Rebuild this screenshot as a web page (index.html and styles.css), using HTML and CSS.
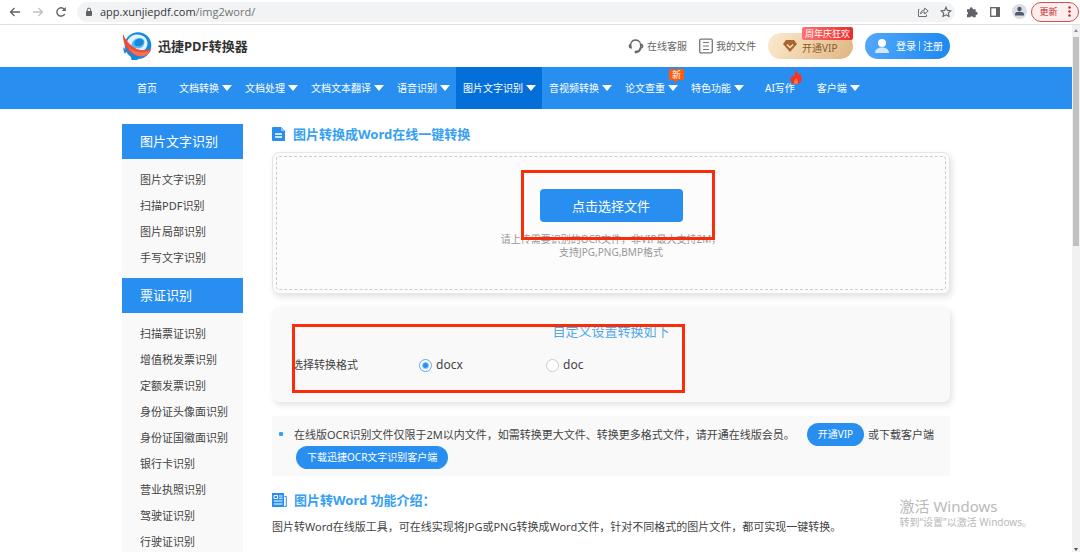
FILE: index.html
```html
<!DOCTYPE html>
<html lang="zh-CN">
<head>
<meta charset="utf-8">
<title>图片转换成Word在线一键转换</title>
<link rel="stylesheet" href="styles.css">
</head>
<body>
<div class="browser-bar">
  <button class="tool" aria-label="后退"><svg width="12" height="12" viewBox="0 0 12 12" fill="none" stroke="#5f6368" stroke-width="1.3"><path d="M11 6H1.5M5.5 2 1.5 6l4 4"/></svg></button>
  <button class="tool" aria-label="前进"><svg width="12" height="12" viewBox="0 0 12 12" fill="none" stroke="#bfc2c6" stroke-width="1.3"><path d="M1 6h9.5M6.5 2l4 4-4 4"/></svg></button>
  <button class="tool" aria-label="刷新"><svg width="12" height="12" viewBox="0 0 12 12" fill="none" stroke="#5f6368" stroke-width="1.4"><path d="M9.8 8A4.2 4.2 0 1 1 9.300 3.200"/><path d="M10.800 1v4H6.800z" fill="#5f6368" stroke="none"/></svg></button>
  <div class="address">
    <svg width="8" height="10" viewBox="0 0 8 10"><rect x="1" y="4" width="6" height="5" rx=".7" fill="#5f6368"/><path d="M2.300 4.500V2.800a1.700 1.700 0 0 1 3.400 0v1.700" fill="none" stroke="#5f6368"/></svg>
    <span class="url">app.xunjiepdf.com<span class="url-path">/img2word/</span></span>
    <button class="tool" aria-label="分享"><svg width="12" height="12" viewBox="0 0 12 12" fill="none" stroke="#6c7074"><path d="M2.500 3.500h-1v7h8v-2"/><path d="M3.500 8c.3-2.600 1.700-3.900 4.200-4V2l3.500 3-3.500 3V6C6 6 4.500 6.700 3.500 8z"/></svg></button>
    <button class="tool" aria-label="收藏"><svg width="12" height="12" viewBox="0 0 12 12" fill="none" stroke="#5f6368" stroke-width="1.1"><path d="m6 1.300 1.400 3.100 3.400.4-2.500 2.300.7 3.400L6 8.800l-3 1.700.7-3.400L1.200 4.800l3.400-.4z"/></svg></button>
  </div>
  <button class="tool" aria-label="扩展"><svg width="12" height="12" viewBox="0 0 12 12" fill="#5f6368"><path d="M1 3.200h2.800a1.500 1.500 0 1 1 2.900 0h3v2.700a1.500 1.500 0 1 1 0 2.900v2.400H7a1.400 1.400 0 0 0-2.700 0H1V8.500a1.400 1.400 0 0 0 0-2.700z"/></svg></button>
  <button class="tool" aria-label="侧边栏"><svg width="12" height="12" viewBox="0 0 12 12"><rect x="1.700" y="1.700" width="8.600" height="8.600" fill="none" stroke="#5f6368" stroke-width="1.300"/><path d="M7 1.500h3.500v9H7z" fill="#5f6368"/></svg></button>
  <button class="tool avatar" aria-label="个人资料"><svg width="15" height="15" viewBox="0 0 15 15"><circle cx="7.500" cy="7.500" r="7.500" fill="#dadde3"/><circle cx="7.500" cy="5" r="2.200" fill="#4d5873"/><path d="M3 11.500V10c0-1.400 2.300-2.300 4.500-2.300S12 8.600 12 10v1.500z" fill="#4d5873"/></svg></button>
  <button class="update">更新<svg width="3" height="11" viewBox="0 0 3 11" fill="#c5221f"><circle cx="1.500" cy="1.500" r="1.200"/><circle cx="1.500" cy="5.500" r="1.200"/><circle cx="1.500" cy="9.500" r="1.200"/></svg></button>
</div>

<div class="viewport">
  <div class="page">
    <header class="header container">
      <a class="brand" href="#">
        <svg width="30" height="30" viewBox="0 0 30 30"><circle cx="16" cy="14.500" r="13.300" fill="#1589dc"/><path d="M1.500 16l3 4-1.500 3C1.500 21 1.200 18 1.500 16z" fill="#1589dc"/><path d="M5 11C7 4.500 14 2 20 4.500c6 2.500 7 9 3.500 13.500-3 3-12 4-18.500-7z" fill="#e2f3ff"/><path d="M10 17c-2-6 3-10.500 8-10 4.500.5 5.500 4 3.500 7.500-2 3.200-5.500 3.500-7 2.500L13 19z" fill="#5cb8f0"/><ellipse cx="17" cy="11.500" rx="4.800" ry="3.700" fill="#1589dc" transform="rotate(-20 17 11.500)"/><path d="M1 3c2 5 5 9 10 13 5.500 3.500 12 4.500 18.300 1.500C28 22 24.500 25 19 25.500 9 25 .5 16 1 3z" fill="#ef4b35"/><path d="M6 15c5 6 13 8 22 5-2 3.500-5 5-9 5.500-5-.5-10-4-13-10.500z" fill="#f7705a"/><path d="M8.500 22.500c3 2.500 7 3.500 11 3.300L15 29H9.500z" fill="#1589dc"/></svg>
        <span>迅捷PDF转换器</span>
      </a>
      <div class="account">
        <a class="quick" href="#"><svg width="16" height="16" viewBox="0 0 16 16" fill="none" stroke="#666" stroke-width="1.300"><path d="M3 10C1.500 5 4 2 7.500 2c3.800 0 5.800 3 5 7"/><path d="M2.500 6.500c-1.500.3-1.800 3 .5 3.500z"/><path d="M13 6.500c2.200.5 2.200 3-.5 3.500-.3 2-1.500 3.500-4 4" stroke-width="1.800"/><circle cx="8" cy="14" r=".8" fill="#444"/></svg>在线客服</a>
        <a class="quick" href="#"><svg width="14" height="16" viewBox="0 0 14 16" fill="none" stroke="#777"><rect x=".7" y="1.200" width="12.600" height="13.600" rx="1.200" stroke-width="1.300"/><path d="M4 4.500h6M4 8h6M4 11.500h6"/></svg>我的文件</a>
        <a class="pill vip" href="#"><svg width="14" height="12" viewBox="0 0 14 12"><path d="M3 0h8l3 4-7 8-7-8z" fill="#a9672f"/><path d="m4 4.500 3 3 3-3" fill="none" stroke="#f8dfb8" stroke-width="1.400"/></svg><span>开通VIP</span><span class="promo">周年庆狂欢</span></a>
        <a class="pill login" href="#"><svg width="14" height="14" viewBox="0 0 14 14"><circle cx="7" cy="4" r="4" fill="#fff"/><path d="M0 14c0-4 3.500-5.500 7-5.500s7 1.500 7 5.500z" fill="#cfe7ff"/></svg><span>登录</span><i class="divider"></i><span>注册</span></a>
      </div>
    </header>

    <nav class="nav">
      <div class="container nav-list">
        <a class="nav-item plain" href="#">首页</a>
        <a class="nav-item drop" href="#">文档转换</a>
        <a class="nav-item drop" href="#">文档处理</a>
        <a class="nav-item drop" href="#">文档文本翻译</a>
        <a class="nav-item drop" href="#">语音识别</a>
        <a class="nav-item drop active" href="#">图片文字识别</a>
        <a class="nav-item drop" href="#">音视频转换</a>
        <a class="nav-item drop" href="#">论文查重<span class="new">新</span></a>
        <a class="nav-item drop" href="#">特色功能</a>
        <a class="nav-item plain" href="#">AI写作<svg class="fire" width="12" height="14" viewBox="0 0 12 14"><path d="M5 0c3 2 3 3.500 3.500 5L10 3.500c1.500 2.500 2 5 1.500 7C11 13 8.500 14 6 14s-5-1-5.500-3.500C0 8 1.500 6.500 2.500 5c.3 1 .5 1.500 1 2C4.500 5 5.500 3 5 0z" fill="#f8321d"/><path d="M6 8c1.500 1.500 2.500 3 2 4.500-.5 1-1 1.500-2 1.500s-2-.5-2.200-1.500C3.500 11 5.500 10 6 8z" fill="#ff7951"/></svg></a>
        <a class="nav-item drop" href="#">客户端</a>
      </div>
    </nav>

    <div class="container layout">
      <aside class="sidebar">
        <h2 class="side-title">图片文字识别</h2>
        <ul class="side-list">
          <li><a href="#">图片文字识别</a></li>
          <li><a href="#">扫描PDF识别</a></li>
          <li><a href="#">图片局部识别</a></li>
          <li><a href="#">手写文字识别</a></li>
        </ul>
        <h2 class="side-title">票证识别</h2>
        <ul class="side-list">
          <li><a href="#">扫描票证识别</a></li>
          <li><a href="#">增值税发票识别</a></li>
          <li><a href="#">定额发票识别</a></li>
          <li><a href="#">身份证头像面识别</a></li>
          <li><a href="#">身份证国徽面识别</a></li>
          <li><a href="#">银行卡识别</a></li>
          <li><a href="#">营业执照识别</a></li>
          <li><a href="#">驾驶证识别</a></li>
          <li><a href="#">行驶证识别</a></li>
        </ul>
      </aside>

      <main class="main">
        <h1 class="title"><svg width="14" height="14" viewBox="0 0 14 14"><path d="M1 0h8l4 4v10H1a1 1 0 0 1-1-1V1a1 1 0 0 1 1-1z" fill="#288ff0"/><path d="M9 0v4h4z" fill="#8fc6fa"/><path d="M3 7h7M3 10h7" stroke="#fff" stroke-width="1.300"/></svg>图片转换成Word在线一键转换</h1>

        <section class="upload">
          <div class="drop-zone">
            <button class="choose">点击选择文件</button>
            <p class="hint">请上传需要识别的OCR文件，非VIP最大支持2M，<br>支持JPG,PNG,BMP格式</p>
          </div>
          <div class="mark mark-upload"></div>
        </section>

        <section class="settings">
          <h2 class="settings-title">自定义设置转换如下</h2>
          <div class="formats" role="radiogroup" aria-labelledby="format-label">
            <span id="format-label" class="format-label">选择转换格式</span>
            <label class="option" for="docx"><input type="radio" id="docx" name="format" checked>docx</label>
            <label class="option" for="doc"><input type="radio" id="doc" name="format">doc</label>
          </div>
          <div class="mark mark-settings"></div>
        </section>

        <ul class="notice">
          <li>在线版OCR识别文件仅限于2M以内文件，如需转换更大文件、转换更多格式文件，请开通在线版会员。<a class="tag tag-vip" href="#">开通VIP</a>或下载客户端 <a class="tag tag-app" href="#">下载迅捷OCR文字识别客户端</a></li>
        </ul>

        <h2 class="title"><svg width="15" height="14" viewBox="0 0 15 14"><path d="M0 0h12v14H0z" fill="#288ff0"/><path d="M12.500 3.500h1.800v10h-2" fill="none" stroke="#288ff0"/><path d="M2 2.500h3.500v3H2zM7 3h3.500M7 5.200h3.500M2 8h8.500M2 11h8.500" fill="none" stroke="#fff"/></svg>图片转Word 功能介绍：</h2>
        <p class="intro">图片转Word在线版工具，可在线实现将JPG或PNG转换成Word文件，针对不同格式的图片文件，都可实现一键转换。</p>
      </main>
    </div>
  </div>
  <div class="scrollbar"><i class="arrow-up"></i><div class="thumb"></div><i class="arrow-down"></i></div>
  <div class="watermark"><strong>激活 Windows</strong><span>转到“设置”以激活 Windows。</span></div>
</div>
</body>
</html>
```
FILE: styles.css
```css
* { box-sizing: border-box; }

body {
  margin: 0;
  height: 100vh;
  display: flex;
  flex-direction: column;
  overflow: hidden;
  background: #fff;
  color: #444;
  font: 11px/16px "Noto Sans", "Noto Sans CJK SC", sans-serif;
}

a { color: inherit; text-decoration: none; }
h1, h2, p, ul { margin: 0; padding: 0; }
ul { list-style: none; }
svg { display: block; flex: none; }
button { font: inherit; border: 0; padding: 0; background: none; cursor: pointer; }

/* Browser toolbar */
.browser-bar {
  flex: none;
  height: 25px;
  display: flex;
  align-items: center;
  gap: 11px;
  padding: 0 1px 1px 9px;
  border-bottom: 1px solid #dfe1e4;
}
.address {
  flex: 1;
  height: 20px;
  display: flex;
  align-items: center;
  gap: 11px;
  margin-left: -1px;
  padding: 0 3px 0 8px;
  border-radius: 10px;
  background: #f1f3f4;
}
.address svg { margin-right: -4px; }
.address .tool svg { margin: 0; }
.url { flex: 1; color: #33363a; font-family: "Open Sans", sans-serif; }
.url-path { color: #6f7377; }
.avatar { margin-right: -7px; }
.update {
  width: 48px;
  height: 20px;
  display: flex;
  align-items: center;
  justify-content: center;
  gap: 10px;
  border: 1px solid #d2514e;
  border-radius: 10px;
  background: #fceeee;
  color: #c5221f;
  font-size: 9px;
}

/* Page frame */
.viewport { flex: 1; min-height: 0; display: flex; position: relative; }
.page { flex: 1; min-width: 0; overflow: hidden; }
.container { max-width: 828px; margin: 0 auto; }

.scrollbar {
  width: 8px;
  display: flex;
  flex-direction: column;
  align-items: center;
  gap: 5px;
  padding: 4px 0 1px;
  background: #f1f1f1;
}
.thumb { width: 6px; height: 40%; margin-bottom: auto; background: #c1c1c1; }
.arrow-up, .arrow-down { border: 2px solid transparent; }
.arrow-up { border-top: 0; border-bottom: 3px solid #8a8a8a; }
.arrow-down { border-bottom: 0; border-top: 3px solid #505050; }

/* Header */
.header {
  height: 42px;
  display: flex;
  align-items: center;
  justify-content: space-between;
}
.brand {
  display: flex;
  align-items: center;
  gap: 6px;
  color: #333;
  font-size: 13px;
  font-weight: 700;
}
.account { display: flex; align-items: center; gap: 12px; font-size: 10px; }
.quick { display: flex; align-items: center; gap: 3px; color: #666; }
.pill {
  position: relative;
  width: 85px;
  height: 26px;
  display: flex;
  align-items: center;
  border-radius: 13px;
}
.vip {
  gap: 5px;
  padding-left: 15px;
  background: linear-gradient(120deg, #fbebcf, #e0b582);
  color: #8a5a2b;
}
.vip > span:nth-child(2) { padding-top: 4px; }
.promo {
  position: absolute;
  top: -6px;
  right: 0;
  padding: 0 3px;
  border-radius: 2px;
  background: linear-gradient(90deg, #ff7373, #ee2b2b);
  color: #fff;
  font-size: 9px;
  line-height: 13px;
}
.login {
  gap: 3px;
  padding-left: 10px;
  background: linear-gradient(100deg, #52a8fb, #1c88f1);
  color: #fff;
}
.login svg { margin-right: 4px; }
.divider { width: 1px; height: 10px; background: #b9dcfc; }

/* Navigation */
.nav { background: #288ff0; color: #fff; font-size: 10px; }
.nav-list { display: flex; }
.nav-item {
  position: relative;
  height: 42px;
  display: flex;
  align-items: center;
  gap: 3px;
  padding: 0 6px 0 7px;
  white-space: nowrap;
}
.nav-item.plain { padding: 0 15px; }
.nav-item.active { background: #046fd8; }
.drop::after {
  content: "";
  border: 5px solid transparent;
  border-top: 6px solid #fff;
  border-bottom: 0;
}
.new {
  position: absolute;
  top: 2px;
  right: 0;
  padding: 0 3px;
  border-radius: 1px;
  background: #ff5b0a;
  font-size: 9px;
  line-height: 11px;
}
.new::after {
  content: "";
  position: absolute;
  top: 11px;
  left: 5px;
  border-right: 4px solid transparent;
  border-top: 3px solid #ff5b0a;
}
.fire { position: absolute; top: 3px; right: 8px; }

/* Two-column layout */
.layout { display: flex; gap: 29px; padding-top: 15px; }
.sidebar { flex: none; width: 121px; background: #f9f9f9; }
.side-title {
  padding-left: 18px;
  background: #288ff0;
  color: #fff;
  font-size: 13px;
  font-weight: 400;
  line-height: 35px;
}
.side-list { padding: 8px 0 7px 18px; line-height: 26px; }
.main { flex: 1; min-width: 0; }
.title {
  display: flex;
  align-items: center;
  gap: 7px;
  color: #35a0f4;
  font-size: 13px;
  font-weight: 700;
  line-height: 20px;
}

/* Upload card */
.upload {
  position: relative;
  margin-top: 8px;
  padding: 3px;
  border: 1px solid #e6e6e6;
  border-radius: 7px;
  background: #fcfcfc;
  box-shadow: 2px 3px 6px #e2e2e2;
}
.drop-zone {
  display: flex;
  flex-direction: column;
  align-items: center;
  padding: 32px 0 30px;
  border: 1px dashed #ccc;
  border-radius: 3px;
}
.choose {
  width: 143px;
  height: 33px;
  border-radius: 4px;
  background: #288ff0;
  color: #fff;
  font-size: 13px;
}
.hint {
  padding-top: 11px;
  color: #999;
  font-size: 10px;
  line-height: 13px;
  text-align: center;
}

/* Annotation frames drawn over the cards */
.mark { position: absolute; border: 3px solid #f92c0b; }
.mark-upload { top: 17px; left: 248px; width: 194px; height: 70px; }
.mark-settings { top: 17px; left: 20px; width: 393px; height: 69px; }

/* Settings card */
.settings {
  position: relative;
  margin-top: 13px;
  padding: 14px 20px 27px;
  border-radius: 7px;
  background: #f9f9f9;
  box-shadow: 2px 3px 6px #e2e2e2;
}
.settings-title {
  color: #4fa9ea;
  font-size: 13px;
  font-weight: 400;
  line-height: 20px;
  text-align: center;
}
.formats { display: flex; align-items: center; padding-top: 14px; line-height: 20px; }
.format-label, .option { width: 127px; }
.option { display: flex; align-items: center; gap: 4px; font-size: 12px; }
.option input {
  appearance: none;
  width: 13px;
  height: 13px;
  margin: 0;
  border: 1px solid #ccc;
  border-radius: 50%;
  background: #fff;
}
.option input:checked {
  border-color: #5aaaf4;
  background: radial-gradient(circle, #288ff0 2px, #fff 4px);
}

/* Notice */
.notice { margin-top: 14px; padding: 7px 8px; background: #f9f9f9; line-height: 23px; }
.notice li { position: relative; padding-left: 14px; }
.notice li::before {
  content: "";
  position: absolute;
  top: 9px;
  left: -1px;
  width: 4px;
  height: 4px;
  border-radius: 1px;
  background: #35a0f4;
}
.tag {
  display: inline-block;
  padding: 0 11px;
  border-radius: 12px;
  background: #288ff0;
  color: #fff;
  font-size: 10px;
  vertical-align: top;
}
.tag-vip { margin: 0 4px 0 12px; }
.tag-app { margin-left: 2px; }

.notice + .title { margin-top: 14px; }
.intro { padding-top: 9px; }

/* Desktop watermark */
.watermark {
  position: absolute;
  right: 48px;
  bottom: 23px;
  display: flex;
  flex-direction: column;
  color: #b9b9b9;
  font-size: 10px;
  line-height: 14px;
}
.watermark strong { font-size: 15px; font-weight: 400; line-height: 18px; }
```
